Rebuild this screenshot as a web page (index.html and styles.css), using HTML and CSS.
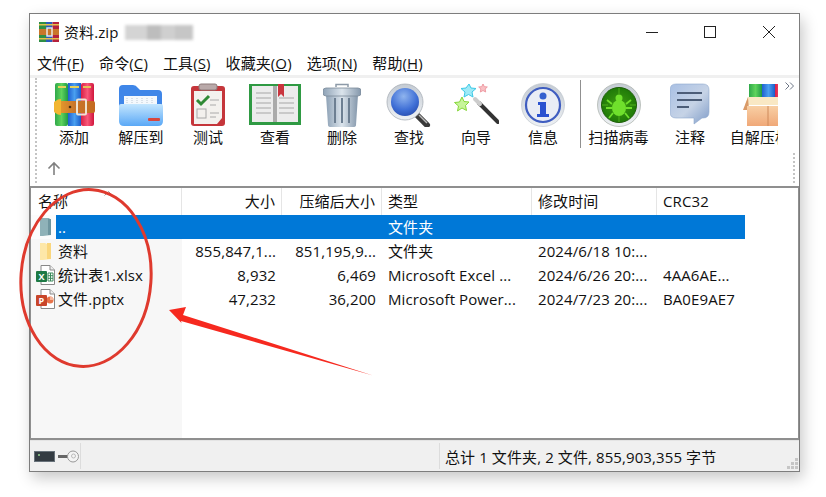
FILE: index.html
```html
<!DOCTYPE html>
<html lang="zh-CN">
  <head>
    <meta charset="UTF-8" />
    <title>资料.zip</title>
    <link rel="stylesheet" href="styles.css">
  </head>
  <body>
    <!-- shared gradients -->
    <svg class="defs" aria-hidden="true">
      <defs>
        <linearGradient id="gGreen"><stop offset="0" stop-color="#2fa84a"/><stop offset=".5" stop-color="#5fd35c"/><stop offset="1" stop-color="#1f9a45"/></linearGradient>
        <linearGradient id="gBlue"><stop offset="0" stop-color="#1f5fd0"/><stop offset=".5" stop-color="#4aa0f0"/><stop offset="1" stop-color="#1c5cc8"/></linearGradient>
        <linearGradient id="gRed"><stop offset="0" stop-color="#d91f45"/><stop offset=".5" stop-color="#f8587a"/><stop offset="1" stop-color="#d0163c"/></linearGradient>
        <linearGradient id="gBelt"><stop offset="0" stop-color="#f0a72c"/><stop offset=".5" stop-color="#c9762a"/><stop offset="1" stop-color="#c46a20"/></linearGradient>
        <linearGradient id="gFolder" x2="0" y2="1"><stop offset="0" stop-color="#c4e6fe"/><stop offset="1" stop-color="#5aa8f6"/></linearGradient>
        <linearGradient id="gSteel"><stop offset="0" stop-color="#8ea2b6"/><stop offset=".5" stop-color="#dbe4ec"/><stop offset="1" stop-color="#8497ab"/></linearGradient>
        <radialGradient id="gLens" cx=".45" cy=".3" r=".8"><stop offset="0" stop-color="#8fb4ee"/><stop offset=".6" stop-color="#3f6fd6"/><stop offset="1" stop-color="#2447a8"/></radialGradient>
        <linearGradient id="gRing" x2="0" y2="1"><stop offset="0" stop-color="#c4cbd3"/><stop offset="1" stop-color="#eef1f4"/></linearGradient>
        <radialGradient id="gBug"><stop offset="0" stop-color="#3f9e10"/><stop offset="1" stop-color="#1f7a08"/></radialGradient>
        <linearGradient id="gBubble" x2="1" y2="1"><stop offset="0" stop-color="#a9c0e4"/><stop offset=".55" stop-color="#c6d3e6"/><stop offset="1" stop-color="#7f9cc8"/></linearGradient>
        <linearGradient id="gCarton" x2="0" y2="1"><stop offset="0" stop-color="#f8cfa4"/><stop offset="1" stop-color="#f0a878"/></linearGradient>
      </defs>
    </svg>

    <div class="window">
      <!-- Title bar -->
      <div class="titlebar">
        <svg class="app-icon" width="20" height="20" viewBox="0 0 20 20">
          <rect x="0" width="7" height="20" fill="#2f8f46"/>
          <rect x="7" width="6.500" height="20" fill="#2a5cbc"/>
          <rect x="13.500" width="6.500" height="20" fill="#b5213c"/>
          <rect y="7" width="20" height="6" fill="#c9762a"/>
          <rect x="8" y="6" width="5" height="8" fill="none" stroke="#eee" stroke-width="1.400"/>
          <rect y="2" width="20" height="1.500" fill="#e3c04d"/>
          <rect y="16" width="20" height="1.500" fill="#e3c04d"/>
        </svg>
        <span class="app-name">资料.zip</span>
        <div class="smudge">
          <i class="sm-a"></i><i class="sm-b"></i><i class="sm-c"></i><i class="sm-d"></i>
        </div>
        <div class="caption">
          <div class="cap-btn"><svg width="14" height="14" viewBox="0 0 14 14"><path d="M1 7.500h12" stroke="#222" fill="none"/></svg></div>
          <div class="cap-btn"><svg width="14" height="14" viewBox="0 0 14 14"><rect x="1.500" y="1.500" width="11" height="11" stroke="#222" fill="none"/></svg></div>
          <div class="cap-btn"><svg width="14" height="14" viewBox="0 0 14 14"><path d="M1 1l12 12M13 1L1 13" stroke="#222" fill="none"/></svg></div>
        </div>
      </div>

      <!-- Menu -->
      <div class="menubar">
        <span>文件(<u>F</u>)</span>
        <span>命令(<u>C</u>)</span>
        <span>工具(<u>S</u>)</span>
        <span>收藏夹(<u>O</u>)</span>
        <span>选项(<u>N</u>)</span>
        <span>帮助(<u>H</u>)</span>
      </div>

      <!-- Toolbar -->
      <div class="toolbar">
        <div class="grip"></div>
        <div class="toolbar-rows">
          <div class="tools">
            <div class="tool">
              <svg width="44" height="44" viewBox="0 0 44 44">
                <rect x="3" y="0" width="13" height="43" rx="2" fill="url(#gGreen)"/>
                <rect x="16" y="0" width="13" height="43" fill="url(#gBlue)"/>
                <rect x="29" y="0" width="13" height="43" rx="2" fill="url(#gRed)"/>
                <rect x="6" y="3" width="8" height="2" fill="#e6d25a"/>
                <rect x="18" y="3" width="9" height="2" fill="#e6d25a"/>
                <rect x="31" y="3" width="8" height="2" fill="#e6c25a"/>
                <rect x="2" y="18" width="41" height="12" rx="2" fill="url(#gBelt)"/>
                <path d="M9 16c-5 0-7 3-7 8s2 8 7 8z" fill="#f2b632"/>
                <rect x="25" y="16.500" width="9" height="15" rx="1" fill="none" stroke="#eee3d0" stroke-width="2"/>
                <circle cx="18" cy="24" r="1.300" fill="#4a2c10"/>
              </svg>
              <span>添加</span>
            </div>
            <div class="tool">
              <svg width="46" height="44" viewBox="0 0 46 44">
                <path d="M1 6q0-4 4-4h10q3 0 5 3l2 2h18q4 0 4 4v26H1z" fill="#3f86e8"/>
                <path d="M6 13h33v13H6z" fill="#f4f8fc"/>
                <path d="M9 15v6M14 15v6M19 15v6M24 15v6M29 15v6M34 15v6" stroke="#bcc8d4" stroke-dasharray="1 1"/>
                <path d="M1 23q0-2 2-2h40q2 0 2 2v15q0 5-5 5H6q-5 0-5-5z" fill="url(#gFolder)"/>
                <rect x="30" y="35" width="12" height="3" rx="1" fill="#d8473e"/>
              </svg>
              <span>解压到</span>
            </div>
            <div class="tool">
              <svg width="36" height="44" viewBox="0 0 36 44">
                <rect x="1" y="3" width="34" height="40" rx="3" fill="#c5363b"/>
                <path d="M4 8h28v27l-5 6H4z" fill="#f3f1ee"/>
                <rect x="9" y="1" width="18" height="6" rx="2" fill="#b9a9a9" stroke="#8d7a7a"/>
                <path d="M7 17l4 4 8-8" fill="none" stroke="#2f8a35" stroke-width="3"/>
                <rect x="7" y="26" width="9" height="9" fill="none" stroke="#a8a8a8"/>
                <path d="M20 17h9M20 22h6M20 30h9M20 34h6" stroke="#aaa"/>
              </svg>
              <span>测试</span>
            </div>
            <div class="tool">
              <svg width="52" height="44" viewBox="0 0 52 44">
                <rect x="0" y="1" width="52" height="41" fill="#2f9a43"/>
                <path d="M3 3h22l1 2 1-2h22v36H3z" fill="#ececec"/>
                <path d="M7 10h15M7 15h15M7 20h15M7 25h15M7 30h15M30 15h15M30 20h15M30 25h15M30 30h15" stroke="#bdbdbd" stroke-width="1.400"/>
                <rect x="24" y="3" width="4" height="36" fill="#aaa"/>
                <path d="M29 1h6v13l-3-3-3 3z" fill="#c9353e"/>
              </svg>
              <span>查看</span>
            </div>
            <div class="tool">
              <svg width="38" height="44" viewBox="0 0 38 44">
                <path d="M13 4V1.500h12V4" fill="none" stroke="#8d9aa8" stroke-width="1.500"/>
                <path d="M3 12h32l-2 30q0 2-3 2H8q-3 0-3-2z" fill="url(#gSteel)"/>
                <path d="M12 15v25M19 15v25M26 15v25" stroke="#6d7f92" stroke-width="2"/>
                <rect x="0" y="5" width="38" height="8" rx="3" fill="url(#gSteel)" stroke="#7c8b9a" stroke-width=".8"/>
              </svg>
              <span>删除</span>
            </div>
            <div class="tool">
              <svg width="46" height="44" viewBox="0 0 46 44">
                <path d="M30 31l11 11" stroke="#3a3a3a" stroke-width="6" stroke-linecap="round"/>
                <path d="M33 32l8 8" stroke="#bbb" stroke-width="1.500"/>
                <circle cx="19" cy="19" r="18" fill="url(#gRing)" stroke="#a9b0b8" stroke-width=".8"/>
                <circle cx="19" cy="19" r="14" fill="url(#gLens)"/>
              </svg>
              <span>查找</span>
            </div>
            <div class="tool">
              <svg width="46" height="44" viewBox="0 0 46 44">
                <path d="M26 20l19 19" stroke="#333" stroke-width="4" stroke-linecap="round"/>
                <path d="M22 16l5 5" stroke="#ccc" stroke-width="4" stroke-linecap="round"/>
                <path d="M16 1l2 4 5 .5-4 3.500 1 5-4.500-2.500L11 14l1-5-4-3.500L13 5z" fill="#9feaf7" stroke="#3cc9e6"/>
                <path d="M9 14l2 4.500 5 .5-3.500 3.500 1 5-4.500-2.500L4.500 28l1-5L1.500 19.500l5-.5z" fill="#c7f59a" stroke="#86d63a"/>
                <path d="M30 1l1.300 2.700 3 .3-2.200 2 .6 3-2.700-1.500L27.300 9l.6-3-2.200-2 3-.3z" fill="#f9c0c4" stroke="#ee9aa2"/>
              </svg>
              <span>向导</span>
            </div>
            <div class="tool">
              <svg width="44" height="44" viewBox="0 0 44 44">
                <circle cx="22" cy="22" r="21.500" fill="url(#gRing)" stroke="#b8bfc8" stroke-width=".6"/>
                <circle cx="22" cy="22" r="17" fill="#e9edf5" stroke="#3f5dc0" stroke-width="2.200"/>
                <circle cx="22" cy="13" r="3.500" fill="#3360cf"/>
                <path d="M17 19h8v12h3v3H16v-3h3V22h-2z" fill="#2a52d0"/>
              </svg>
              <span>信息</span>
            </div>
            <div class="tool-sep"></div>
            <div class="tool tool-wide">
              <svg width="44" height="44" viewBox="0 0 44 44">
                <circle cx="22" cy="22" r="21.500" fill="url(#gRing)" stroke="#9aa39a" stroke-width=".6"/>
                <circle cx="22" cy="22" r="17.500" fill="url(#gBug)" stroke="#1d5e08"/>
                <path d="M22 5v6M22 33v6M5 22h6M33 22h6" stroke="#4fae1c"/>
                <ellipse cx="22" cy="25" rx="7" ry="8" fill="#6fe02c"/>
                <circle cx="22" cy="15" r="3.500" fill="#6fe02c"/>
                <path d="M15 21l-5-4M29 21l5-4M15 25h-6M29 25h6M16 30l-4 5M28 30l4 5" stroke="#6fe02c" stroke-width="1.800" fill="none"/>
              </svg>
              <span>扫描病毒</span>
            </div>
            <div class="tool">
              <svg width="40" height="44" viewBox="0 0 40 44">
                <path d="M6 1h27q6 0 6 6v22q0 6-6 6h-1L24 41v-6H6q-6 0-6-6V7q0-6 6-6z" fill="url(#gBubble)" stroke="#8fa7cc" stroke-width=".6"/>
                <path d="M7 10h25M7 17h25M7 24h12" stroke="#4c5d78" stroke-width="2"/>
              </svg>
              <span>注释</span>
            </div>
            <div class="tool tool-last">
              <svg width="52" height="44" viewBox="0 0 52 44">
                <rect x="7" y="1" width="13" height="14" fill="url(#gGreen)"/>
                <rect x="20" y="1" width="13" height="14" fill="url(#gBlue)"/>
                <rect x="33" y="1" width="13" height="14" fill="url(#gRed)"/>
                <path d="M6 14h44l2 8H3z" fill="#f9e8c4"/>
                <path d="M6 14L1 27h6z" fill="#d99a68"/>
                <rect x="5" y="23" width="44" height="20" fill="url(#gCarton)"/>
                <path d="M26 23v20" stroke="#cf8a5a"/>
              </svg>
              <span>自解压格式</span>
            </div>
          </div>
          <div class="toolbar-row2">
            <svg width="16" height="16" viewBox="0 0 16 16"><path d="M8 14V2M2.500 7.500L8 2l5.500 5.500" fill="none" stroke="#808080" stroke-width="1.600"/></svg>
          </div>
        </div>
        <svg class="more" width="10" height="8" viewBox="0 0 10 8"><path d="M.5.500L4 4 .5 7.500M5 .5L8.500 4 5 7.500" fill="none" stroke="#6d7686"/></svg>
        <div class="grip-end"></div>
      </div>

      <!-- File list -->
      <div class="list">
        <div class="list-head">
          <div class="col">名称<svg class="sort" width="9" height="5" viewBox="0 0 9 5"><path d="M.5 4.500l4-4 4 4" fill="none" stroke="#999"/></svg></div>
          <div class="col num">大小</div>
          <div class="col num">压缩后大小</div>
          <div class="col">类型</div>
          <div class="col">修改时间</div>
          <div class="col">CRC32</div>
        </div>
        <div class="row">
          <div class="ico ico-up">
            <svg width="14" height="20" viewBox="0 0 14 20"><path d="M1 1h9l2 2v15l-8 1H1z" fill="#8fb2b8"/><path d="M9 2h3v16H9z" fill="#6f969f"/></svg>
          </div>
          <div class="cells selected">
            <div class="cell">..</div>
            <div class="cell num"></div>
            <div class="cell num"></div>
            <div class="cell">文件夹</div>
            <div class="cell"></div>
            <div class="cell"></div>
          </div>
        </div>
        <div class="row">
          <div class="ico">
            <svg width="14" height="18" viewBox="0 0 14 18"><path d="M1 1h5l2 1h4v15l-8 1H1z" fill="#fde7a8"/><path d="M8 1h4v16H8z" fill="#fad67c"/></svg>
          </div>
          <div class="cells">
            <div class="cell">资料</div>
            <div class="cell num">855,847,1...</div>
            <div class="cell num">851,195,9...</div>
            <div class="cell">文件夹</div>
            <div class="cell">2024/6/18 10:...</div>
            <div class="cell"></div>
          </div>
        </div>
        <div class="row">
          <div class="ico">
            <svg width="19" height="20" viewBox="0 0 19 20">
              <path d="M5 .5h9l4.500 4.500v14.500H5z" fill="#fff" stroke="#888"/>
              <path d="M14 .5V5h4.500" fill="#eee" stroke="#888"/>
              <path d="M12 8h5v8h-5zM12 10.700h5M12 13.300h5M14.500 8v8" fill="none" stroke="#3a8a5a"/>
              <rect x="0" y="6" width="11" height="11" rx="1" fill="#1e7a45"/>
              <text x="5.500" y="15" class="badge-text">X</text>
            </svg>
          </div>
          <div class="cells">
            <div class="cell">统计表1.xlsx</div>
            <div class="cell num">8,932</div>
            <div class="cell num">6,469</div>
            <div class="cell">Microsoft Excel ...</div>
            <div class="cell">2024/6/26 20:...</div>
            <div class="cell">4AA6AE...</div>
          </div>
        </div>
        <div class="row">
          <div class="ico">
            <svg width="19" height="20" viewBox="0 0 19 20">
              <path d="M5 .5h9l4.500 4.500v14.500H5z" fill="#fff" stroke="#888"/>
              <path d="M14 .5V5h4.500" fill="#eee" stroke="#888"/>
              <circle cx="14" cy="11" r="3.500" fill="#e8734a"/>
              <path d="M14 11V7.500a3.500 3.500 0 0 1 3.500 3.500z" fill="#f6b79c"/>
              <rect x="0" y="6" width="11" height="11" rx="1" fill="#c8452a"/>
              <text x="5.500" y="15" class="badge-text">P</text>
            </svg>
          </div>
          <div class="cells">
            <div class="cell">文件.pptx</div>
            <div class="cell num">47,232</div>
            <div class="cell num">36,200</div>
            <div class="cell">Microsoft Power...</div>
            <div class="cell">2024/7/23 20:...</div>
            <div class="cell">BA0E9AE7</div>
          </div>
        </div>
      </div>

      <!-- Status bar -->
      <div class="statusbar">
        <div class="status-icons">
          <svg width="21" height="11" viewBox="0 0 21 11"><rect x=".5" y=".5" width="20" height="10" fill="#333b42" stroke="#68727a"/><rect x="4" y="3" width="2" height="2" fill="#7fb07f"/></svg>
          <svg width="21" height="13" viewBox="0 0 21 13"><path d="M0 5h11v3H0z" fill="#666"/><circle cx="15" cy="6.500" r="5.500" fill="#f4f4f4" stroke="#999"/><circle cx="15.500" cy="6" r="2" fill="none" stroke="#bbb"/></svg>
        </div>
        <div class="status-mid"></div>
        <div class="status-text">总计 1 文件夹, 2 文件, 855,903,355 字节</div>
        <svg class="size-grip" width="12" height="12" viewBox="0 0 12 12"><path d="M9 0h3v3H9zM5 4h3v3H5zM9 4h3v3H9zM1 8h3v3H1zM5 8h3v3H5zM9 8h3v3H9z" fill="#c6c6c6"/></svg>
      </div>
    </div>

    <!-- Hand drawn markup on top of the screenshot -->
    <svg class="markup" width="826" height="497" viewBox="0 0 826 497">
      <ellipse cx="86" cy="278" rx="65" ry="88.500" transform="rotate(4 86 278)" fill="none" stroke="#df3a2e" stroke-width="3"/>
      <path d="M169 310L186 307 183 315 373 375.500 181 321 181.500 323z" fill="#f6291f"/>
    </svg>
  </body>
</html>
```

FILE: styles.css
```css
* {
  box-sizing: border-box;
}
body {
  margin: 0;
  background-color: white;
  font-family: "Open Sans", "Noto Sans CJK SC", sans-serif;
  font-size: 15px;
  letter-spacing: 0.1px;
  color: #111;
  height: 497px;
  overflow: hidden;
}
.defs {
  position: absolute;
  width: 0;
  height: 0;
}
.markup {
  position: absolute;
  top: 0;
  left: 0;
}
/* Window */
.window {
  width: 771px;
  height: 459px;
  margin: 13px 0 0 29px;
  border: 1px solid #7d7d7d;
  background-color: white;
  box-shadow: 3px 6px 14px rgba(0, 0, 0, 0.22);
  display: flex;
  flex-direction: column;
}
/* Title bar */
.titlebar {
  height: 36px;
  display: flex;
  align-items: center;
  padding-left: 9px;
  flex-shrink: 0;
}
.app-icon {
  margin-right: 5px;
}
.app-name {
  line-height: 20px;
}
.smudge {
  display: flex;
  margin-left: 6px;
  height: 15px;
  filter: blur(1.500px);
}
.smudge i {
  display: block;
  height: 15px;
}
.sm-a {
  width: 22px;
  background-color: #d4d4d4;
}
.sm-b {
  width: 14px;
  background-color: #bdbdbd;
}
.sm-c {
  width: 14px;
  background-color: #cfcfcf;
}
.sm-d {
  width: 18px;
  background-color: #c6c6c6;
}
.caption {
  display: flex;
  margin-left: auto;
  margin-right: 1px;
}
.cap-btn {
  width: 58.500px;
  height: 36px;
  display: flex;
  align-items: center;
  justify-content: center;
}
/* Menu */
.menubar {
  height: 25px;
  display: flex;
  align-items: center;
  gap: 15px;
  padding-left: 7px;
  flex-shrink: 0;
}
/* Toolbar */
.toolbar {
  height: 111px;
  position: relative;
  display: flex;
  border-top: 3px solid #f0f0f0;
  flex-shrink: 0;
}
.grip {
  width: 2px;
  margin: 0 0 3px 5px;
  border-left: 2px dotted #c4c4c4;
}
.toolbar-rows {
  width: 741px;
  overflow: hidden;
  display: flex;
  flex-direction: column;
}
.tools {
  display: flex;
  padding: 5px 0 0 3.500px;
  height: 80px;
}
.tool {
  width: 67px;
  flex-shrink: 0;
  display: flex;
  flex-direction: column;
  align-items: center;
}
.tool span {
  margin-top: -1px;
  line-height: 22px;
  white-space: nowrap;
}
.tool-wide {
  width: 76px;
}
.tool-last {
  width: 88px;
}
.tool-sep {
  width: 1px;
  height: 68px;
  margin: -3px 0 0 3px;
  background-color: #909090;
  flex-shrink: 0;
}
.toolbar-row2 {
  padding: 3px 0 0 9px;
}
.more {
  position: absolute;
  top: 4px;
  right: 4px;
}
.grip-end {
  position: absolute;
  right: 4px;
  bottom: 3px;
  height: 30px;
  border-left: 2px dotted #c4c4c4;
}
/* File list */
.list {
  height: 254px;
  border: 2px solid #8f8f8f;
  border-width: 2px 1px 2px 1px;
  background: linear-gradient(to right, #f7f7f7 151px, white 151px);
  flex-shrink: 0;
}
.list-head {
  display: grid;
  grid-template-columns: 151px 100px 100px 150px 125px 88px;
  height: 27px;
  background-color: white;
}
.col {
  position: relative;
  padding: 0 6px 0 6px;
  line-height: 27px;
  border-right: 1px solid #e5e5e5;
  white-space: nowrap;
}
.col:first-child {
  padding-left: 7px;
}
.col:last-child {
  border-right: none;
}
.sort {
  position: absolute;
  top: 3px;
  left: 73px;
}
.row {
  display: flex;
  height: 24px;
}
.ico {
  width: 25px;
  flex-shrink: 0;
  display: flex;
  align-items: center;
  justify-content: center;
  padding-left: 4px;
}
.ico-up {
  background-color: #fcfcfc;
}
.cells {
  display: grid;
  grid-template-columns: 126px 100px 100px 150px 125px 88px;
  flex-shrink: 0;
}
.cell {
  padding: 0 6px;
  line-height: 24px;
  white-space: nowrap;
  overflow: hidden;
}
.cell:first-child {
  padding-left: 2px;
}
.num {
  text-align: right;
}
.selected {
  background-color: #0078d7;
  color: white;
}
.badge-text {
  font-family: "Open Sans", sans-serif;
  font-size: 9px;
  font-weight: 700;
  fill: white;
  text-anchor: middle;
}
/* Status bar */
.statusbar {
  flex-grow: 1;
  display: flex;
  align-items: center;
  background-color: #f0f0f0;
  border-top: 1px solid #e4e4e4;
}
.status-icons {
  width: 51px;
  height: 26px;
  padding-left: 4px;
  display: flex;
  align-items: center;
  gap: 3px;
  border-right: 1px solid #dcdcdc;
}
.status-mid {
  width: 359px;
  height: 26px;
  border-right: 1px solid #dcdcdc;
}
.status-text {
  padding-left: 5px;
  white-space: nowrap;
}
.size-grip {
  margin: auto 1px 1px auto;
}
```
